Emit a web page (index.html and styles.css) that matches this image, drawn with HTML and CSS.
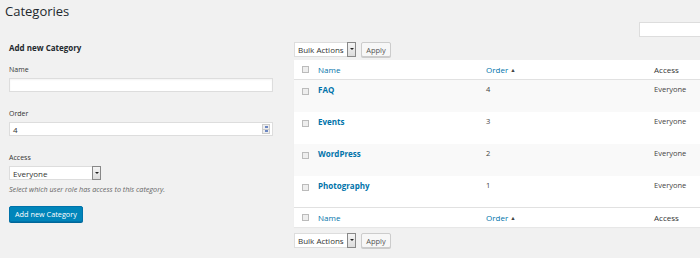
FILE: index.html
```html
<!DOCTYPE html>
<html lang="en">
<head>
    <meta charset="UTF-8">
    <meta name="viewport" content="width=device-width, initial-scale=1.0">
    <title>Categories</title>
    <link rel="stylesheet" href="styles.css">
</head>
<body>
    <div class="wrap">
        <h1>Categories</h1>

        <div class="columns">
            <!-- Add new category form -->
            <div class="col-left">
                <h3>Add new Category</h3>
                <div class="field">
                    <label>Name</label>
                    <input type="text" class="text-input">
                </div>
                <div class="field">
                    <label>Order</label>
                    <div class="number-input">
                        <span>4</span>
                        <span class="spinner"><i class="up"></i><i class="down"></i></span>
                    </div>
                </div>
                <div class="field field-last">
                    <label>Access</label>
                    <div class="select select-access">
                        <span>Everyone</span>
                        <span class="select-arrow"></span>
                    </div>
                    <p class="hint">Select which user role has access to this category.</p>
                </div>
                <button class="button-primary">Add new Category</button>
            </div>

            <!-- Category list -->
            <div class="col-right">
                <div class="search-row">
                    <input type="text" class="search-box">
                </div>
                <div class="tablenav">
                    <div class="select select-bulk">
                        <span>Bulk Actions</span>
                        <span class="select-arrow"></span>
                    </div>
                    <button class="button">Apply</button>
                </div>

                <table class="list-table">
                    <thead>
                        <tr>
                            <th class="check"><span class="checkbox"></span></th>
                            <th class="col-name"><a href="#">Name</a></th>
                            <th class="col-order"><a href="#">Order</a> <span class="sort">&#9650;</span></th>
                            <th class="col-access">Access</th>
                        </tr>
                    </thead>
                    <tbody>
                        <tr class="alt">
                            <td class="check"><span class="checkbox"></span></td>
                            <td class="col-name"><a href="#" class="row-title">FAQ</a></td>
                            <td class="col-order">4</td>
                            <td class="col-access">Everyone</td>
                        </tr>
                        <tr>
                            <td class="check"><span class="checkbox"></span></td>
                            <td class="col-name"><a href="#" class="row-title">Events</a></td>
                            <td class="col-order">3</td>
                            <td class="col-access">Everyone</td>
                        </tr>
                        <tr class="alt">
                            <td class="check"><span class="checkbox"></span></td>
                            <td class="col-name"><a href="#" class="row-title">WordPress</a></td>
                            <td class="col-order">2</td>
                            <td class="col-access">Everyone</td>
                        </tr>
                        <tr>
                            <td class="check"><span class="checkbox"></span></td>
                            <td class="col-name"><a href="#" class="row-title">Photography</a></td>
                            <td class="col-order">1</td>
                            <td class="col-access">Everyone</td>
                        </tr>
                    </tbody>
                    <tfoot>
                        <tr>
                            <th class="check"><span class="checkbox"></span></th>
                            <th class="col-name"><a href="#">Name</a></th>
                            <th class="col-order"><a href="#">Order</a> <span class="sort">&#9650;</span></th>
                            <th class="col-access">Access</th>
                        </tr>
                    </tfoot>
                </table>

                <div class="tablenav bottom">
                    <div class="select select-bulk">
                        <span>Bulk Actions</span>
                        <span class="select-arrow"></span>
                    </div>
                    <button class="button">Apply</button>
                </div>
            </div>
        </div>
    </div>
</body>
</html>
```

FILE: styles.css
```css
body {
    margin: 0;
    padding: 0;
    background-color: #f1f1f1;
    font-family: "Open Sans", "Liberation Sans", sans-serif;
    color: #444;
    font-size: 8px;
    overflow: hidden;
}

.wrap {
    width: 720px;
}

h1 {
    margin: 0;
    padding: 1px 0 0 5px;
    height: 21px;
    font-size: 13px;
    font-weight: 400;
    line-height: 20px;
    color: #23282d;
}

.columns {
    display: flex;
}

/* Left column */
.col-left {
    width: 264px;
    padding: 20px 0 0 9px;
    flex-shrink: 0;
}

.col-left h3 {
    margin: 0 0 11px;
    font-size: 8px;
    line-height: 12px;
    font-weight: 700;
    color: #23282d;
}

.field {
    margin-bottom: 17px;
}

.field label {
    display: block;
    font-size: 7px;
    line-height: 10px;
    margin-bottom: 3px;
    color: #333;
}

.text-input {
    display: block;
    box-sizing: border-box;
    width: 264px;
    height: 14px;
    margin: 0;
    border: 1px solid #ddd;
    background: #fff;
    box-shadow: inset 0 1px 2px rgba(0, 0, 0, 0.05);
}

.number-input {
    box-sizing: border-box;
    width: 264px;
    height: 14px;
    border: 1px solid #ddd;
    background: #fff;
    display: flex;
    align-items: center;
    justify-content: space-between;
    padding: 0 2px 0 3px;
    font-size: 8px;
    color: #333;
}

.spinner {
    display: flex;
    flex-direction: column;
    width: 8px;
    height: 10px;
    border: 1px solid #ccc;
    background: #eee;
    box-sizing: border-box;
}

.spinner i {
    flex: 1;
    border-bottom: 1px solid #ccc;
    background: linear-gradient(#6b86c2, #6b86c2) center / 3px 2px no-repeat;
}

.spinner i.down {
    border-bottom: none;
}

.select {
    box-sizing: border-box;
    display: flex;
    align-items: center;
    justify-content: space-between;
    height: 15px;
    border: 1px solid #ddd;
    background: #fff;
    padding-left: 3px;
    color: #333;
    font-size: 8px;
}

.select-access {
    width: 92px;
    height: 14px;
}

.select-arrow {
    width: 9px;
    height: 15px;
    margin-right: -1px;
    box-sizing: border-box;
    border: 1px solid #888;
    background: linear-gradient(#f4f4f4, #dcdcdc);
    position: relative;
}

.select-access .select-arrow {
    height: 14px;
}

.select-arrow::after {
    content: "";
    position: absolute;
    left: 2px;
    top: 5px;
    border-left: 2px solid transparent;
    border-right: 2px solid transparent;
    border-top: 2px solid #222;
}

.hint {
    margin: 4px 0 0;
    font-size: 7.2px;
    line-height: 10px;
    font-style: italic;
    color: #666;
}

.field-last {
    margin-bottom: 12px;
}

.button-primary {
    height: 16px;
    padding: 0 5px;
    border: 1px solid #0073aa;
    border-radius: 2px;
    background: #0085ba;
    color: #fff;
    font-family: inherit;
    font-size: 7.3px;
    box-shadow: 0 1px 0 #006799;
}

/* Right column */
.col-right {
    margin-left: 21px;
    width: 420px;
}

.search-row {
    display: flex;
    justify-content: flex-end;
    height: 20px;
}

.search-box {
    box-sizing: border-box;
    width: 84px;
    height: 15px;
    margin: 0 -9px 0 0;
    border: 1px solid #ddd;
    background: #fff;
}

.tablenav {
    display: flex;
    gap: 5px;
    height: 15px;
    margin-bottom: 3px;
}

.tablenav.bottom {
    margin-top: 6px;
}

.select-bulk {
    width: 62px;
    padding-left: 3px;
}

.button {
    box-sizing: border-box;
    height: 15px;
    width: 30px;
    padding: 0;
    border: 1px solid #ccc;
    border-radius: 2px;
    background: #f7f7f7;
    box-shadow: 0 1px 0 #ccc;
    color: #555;
    font-family: inherit;
    font-size: 7.5px;
}

.list-table {
    width: 420px;
    border-collapse: collapse;
    background: #fff;
    box-shadow: 0 1px 1px rgba(0, 0, 0, 0.04);
}

.list-table th,
.list-table td {
    text-align: left;
    font-weight: 400;
    padding: 0;
    vertical-align: top;
}

.list-table thead th,
.list-table tfoot th {
    height: 19px;
    vertical-align: middle;
    font-size: 8px;
    color: #333;
}

.list-table thead tr {
    border-bottom: 1px solid #e1e1e1;
}

.list-table tfoot tr {
    border-top: 1px solid #e1e1e1;
}

.list-table tbody td {
    height: 32px;
    padding-top: 4px;
    box-sizing: border-box;
    font-size: 7.5px;
    color: #444;
}

.list-table tbody tr.alt {
    background: #f9f9f9;
}

.list-table a {
    color: #0073aa;
    text-decoration: none;
}

.row-title {
    font-weight: 700;
    font-size: 8px;
}

.check {
    width: 24px;
}

.checkbox {
    display: block;
    width: 7px;
    height: 7px;
    margin-left: 8px;
    border: 1px solid #bbb;
    background: #eee;
    box-sizing: border-box;
}

.list-table tbody .checkbox {
    margin-top: 4px;
}

.col-name {
    width: 168px;
}

.col-order {
    width: 168px;
}

.sort {
    font-size: 5.5px;
    color: #444;
    vertical-align: 1px;
}
```
